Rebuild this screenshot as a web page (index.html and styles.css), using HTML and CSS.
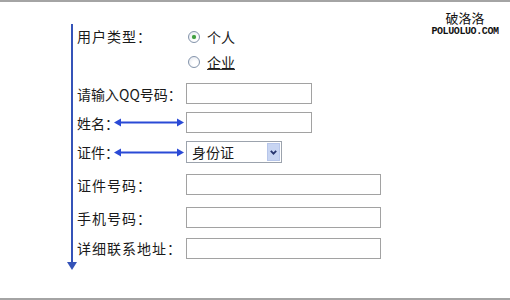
FILE: index.html
```html
<!DOCTYPE html>
<html lang="zh-CN">
  <head>
    <meta charset="UTF-8" />
    <title>用户注册</title>
    <link rel="stylesheet" href="styles.css">
  </head>
  <body>
    <div class="page">
      <div class="logo">
        <div class="logo-cn">破洛洛</div>
        <div class="logo-en">POLUOLUO.COM</div>
      </div>

      <div class="layout">
        <div class="guide"></div>

        <form class="form">
          <div class="label label-top">用户类型：</div>
          <div class="choices">
            <label class="choice"><span class="radio checked"></span>个人</label>
            <label class="choice"><span class="radio"></span><u>企业</u></label>
          </div>

          <div class="label label-tight">请输入QQ号码：</div>
          <div><input class="text short" type="text"></div>

          <div class="label label-tight">姓名：<svg class="harrow" width="70" height="9" viewBox="0 0 70 9">
              <line x1="5" y1="4.5" x2="65" y2="4.5" />
              <polygon points="0,4.5 7,0.5 7,8.5" />
              <polygon points="70,4.5 63,0.5 63,8.5" />
            </svg>
          </div>
          <div><input class="text short" type="text"></div>

          <div class="label label-tight">证件：<svg class="harrow" width="70" height="9" viewBox="0 0 70 9">
              <line x1="5" y1="4.5" x2="65" y2="4.5" />
              <polygon points="0,4.5 7,0.5 7,8.5" />
              <polygon points="70,4.5 63,0.5 63,8.5" />
            </svg>
          </div>
          <div>
            <div class="select">
              <span class="select-text">身份证</span>
              <span class="select-btn">
                <svg width="7" height="5" viewBox="0 0 7 5">
                  <polyline points="0.8,0.8 3.5,3.6 6.2,0.8" />
                </svg>
              </span>
            </div>
          </div>

          <div class="label">证件号码：</div>
          <div><input class="text long" type="text"></div>

          <div class="label">手机号码：</div>
          <div><input class="text long" type="text"></div>

          <div class="label">详细联系地址：</div>
          <div><input class="text long" type="text"></div>
        </form>
      </div>
    </div>
  </body>
</html>
```

FILE: styles.css
```css
* {
  box-sizing: border-box;
}

body {
  margin: 0;
  background: #ffffff;
  color: #1a1a1a;
  font-family: "Noto Sans CJK SC", "DejaVu Sans", sans-serif;
  font-size: 14px;
}

.page {
  position: relative;
  height: 300px;
  border-top: 2px solid #a4a4a4;
  border-bottom: 2px solid #a4a4a4;
}

/* watermark in the top right corner */
.logo {
  position: absolute;
  top: 7px;
  right: 10px;
  width: 70px;
  text-align: center;
  color: #111;
}

.logo-cn {
  font-size: 13px;
  line-height: 18px;
}

.logo-en {
  font-family: "Liberation Mono", monospace;
  font-size: 10px;
  font-weight: bold;
  line-height: 10px;
  letter-spacing: -0.4px;
}

.layout {
  display: flex;
  padding: 22px 0 0 71px;
}

/* blue vertical arrow on the left */
.guide {
  position: relative;
  width: 2px;
  margin-right: 4px;
  background: #3553b8;
}

.guide::after {
  content: "";
  position: absolute;
  left: -4px;
  top: 100%;
  border-left: 5px solid transparent;
  border-right: 5px solid transparent;
  border-top: 8px solid #3553b8;
}

.form {
  display: grid;
  grid-template-columns: 109px auto;
  grid-template-rows: 54px 31px 27px 32px 33px 33px 28px;
  align-items: center;
  margin: 0;
}

.label {
  display: flex;
  align-items: center;
  white-space: nowrap;
  letter-spacing: 1px;
}

.label-tight {
  letter-spacing: 0;
}

.label-top {
  align-self: start;
  line-height: 25px;
}

/* double arrow between a label and its field */
.harrow {
  flex-shrink: 0;
  margin-left: -5px;
  fill: #2a4ad6;
  stroke: #2a4ad6;
}

.harrow line {
  stroke-width: 2;
}

.harrow polygon {
  stroke: none;
}

.choices {
  align-self: start;
  display: flex;
  flex-direction: column;
}

.choice {
  display: flex;
  align-items: center;
  height: 25px;
}

.choice u {
  text-decoration-color: #333;
}

.radio {
  position: relative;
  width: 12px;
  height: 12px;
  margin: 0 7px 0 2px;
  border: 1px solid #8494ab;
  border-radius: 50%;
  background: radial-gradient(circle at 60% 65%, #ffffff 30%, #dde2ea 100%);
}

.radio.checked::after {
  content: "";
  position: absolute;
  left: 3px;
  top: 3px;
  width: 4px;
  height: 4px;
  border-radius: 50%;
  background: #3f9d3f;
  box-shadow: 0 0 1px #6fc26f;
}

.text {
  display: block;
  height: 21px;
  border: 1px solid #a2a2a2;
  background: #fff;
  padding: 0 3px;
}

.short {
  width: 126px;
}

.long {
  width: 195px;
}

.select {
  display: flex;
  align-items: center;
  width: 96px;
  height: 22px;
  padding: 1px;
  border: 1px solid #9ca3ad;
}

.select-text {
  flex: 1;
  padding-left: 4px;
  line-height: 18px;
}

.select-btn {
  display: flex;
  align-items: center;
  justify-content: center;
  width: 13px;
  height: 18px;
  background: #c8d5f2;
  border: 1px solid #b7c6ea;
}

.select-btn polyline {
  fill: none;
  stroke: #27366e;
  stroke-width: 1.8;
}
```
